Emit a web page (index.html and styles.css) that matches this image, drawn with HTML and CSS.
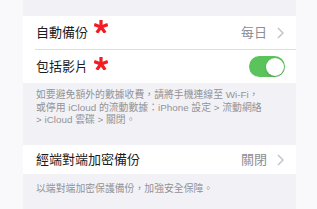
FILE: index.html
```html
<!DOCTYPE html>
<html lang="zh-Hant">
<head>
<meta charset="utf-8">
<link rel="stylesheet" href="styles.css">
</head>
<body>
<div class="page">
  <div class="column">
    <div class="group group-first">
      <div class="row">
        <span class="label">自動備份<svg class="mark mark-a" viewBox="0 0 14 13"><g stroke="#f21d24" stroke-width="3.2" stroke-linecap="butt"><line x1="7" y1="7" x2="7" y2="0"/><line x1="7" y1="7" x2="13.8" y2="4.6"/><line x1="7" y1="7" x2="11.2" y2="12.8"/><line x1="7" y1="7" x2="2.8" y2="12.8"/><line x1="7" y1="7" x2="0.2" y2="4.6"/></g></svg></span>
        <span class="trail">
          <span class="value">每日</span>
          <svg class="chev" viewBox="0 0 7 12"><path d="M1 1 L6 6 L1 11" fill="none" stroke="#c4c4c8" stroke-width="1.5"/></svg>
        </span>
      </div>
      <div class="sep"></div>
      <div class="row row-toggle">
        <span class="label">包括影片<svg class="mark mark-b" viewBox="0 0 14 13"><g stroke="#f21d24" stroke-width="3.2" stroke-linecap="butt"><line x1="7" y1="7" x2="7" y2="0"/><line x1="7" y1="7" x2="13.8" y2="4.6"/><line x1="7" y1="7" x2="11.2" y2="12.8"/><line x1="7" y1="7" x2="2.8" y2="12.8"/><line x1="7" y1="7" x2="0.2" y2="4.6"/></g></svg></span>
        <span class="toggle"><span class="knob"></span></span>
      </div>
    </div>
    <div class="footer footer-a">如要避免額外的數據收費，請將手機連線至 Wi-Fi，<br>或停用 iCloud 的流動數據：iPhone 設定 &gt; 流動網絡<br>&gt; iCloud 雲碟 &gt; 關閉。</div>
    <div class="group">
      <div class="row row-short">
        <span class="label">經端對端加密備份</span>
        <span class="trail">
          <span class="value">關閉</span>
          <svg class="chev" viewBox="0 0 7 12"><path d="M1 1 L6 6 L1 11" fill="none" stroke="#c4c4c8" stroke-width="1.5"/></svg>
        </span>
      </div>
    </div>
    <div class="footer footer-b">以端對端加密保護備份，加強安全保障。</div>
  </div>
</div>
</body>
</html>
```

FILE: styles.css
```css
html, body {
  margin: 0;
  padding: 0;
  background: #f9f9fb;
}
body {
  font-family: "Liberation Sans", "Noto Sans CJK TC", sans-serif;
  width: 317px;
  height: 209px;
  overflow: hidden;
}
.page {
  padding: 0 21px 0 23px;
  height: 209px;
}
.column {
  background: #f2f2f6;
  height: 209px;
  padding-top: 16px;
  box-sizing: border-box;
}
.group {
  background: #ffffff;
}
.row {
  height: 33px;
  display: flex;
  align-items: center;
  justify-content: space-between;
  padding: 0 12px 0 13px;
}
.row-toggle {
  padding-right: 11px;
}
.row-short {
  height: 29px;
}
.sep {
  height: 1px;
  background: #dedee2;
  margin-left: 12px;
}
.label {
  position: relative;
  font-size: 13px;
  line-height: 18px;
  color: #1c1c1e;
}
.mark {
  position: absolute;
  left: calc(100% + 6px);
  width: 14px;
  height: 13px;
}
.mark-a { top: -4px; }
.mark-b { top: -1px; }
.trail {
  display: flex;
  align-items: center;
  gap: 10px;
}
.value {
  font-size: 13px;
  line-height: 18px;
  color: #8e8e93;
}
.chev {
  width: 7px;
  height: 12px;
  display: block;
}
.toggle {
  width: 36px;
  height: 21px;
  border-radius: 11px;
  background: #5ac35c;
  position: relative;
  display: block;
}
.knob {
  position: absolute;
  right: 1.5px;
  top: 1.5px;
  width: 18px;
  height: 18px;
  border-radius: 50%;
  background: #ffffff;
  box-shadow: 0 1px 2px rgba(0,0,0,0.2);
}
.footer {
  font-size: 9.85px;
  line-height: 12.5px;
  color: #929297;
  padding: 0 12px 0 13px;
  white-space: nowrap;
}
.footer-a {
  padding-top: 6px;
  box-sizing: border-box;
  height: 62px;
}
.footer-b {
  padding-top: 9px;
}
```
